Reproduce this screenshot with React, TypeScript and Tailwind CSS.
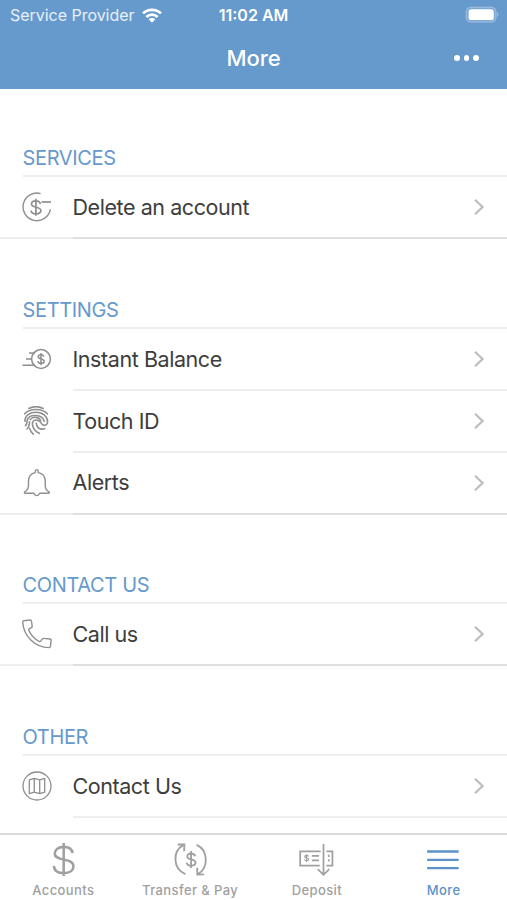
import React from 'react';

type IconProps = { className?: string };

const DeleteAccountIcon: React.FC<IconProps> = ({ className }) => (
  <svg viewBox="0 0 30 30" fill="none" stroke="currentColor" strokeWidth="1.4" className={className}>
    <path d="M18.6 1.6A13.8 13.8 0 1 0 28.4 17.4" />
    <path d="M19.5 10h9.5" strokeWidth="1.7" />
    <path d="M18.4 12c-.4-2-2-3.1-4.5-3.1-2.6 0-4.4 1.2-4.4 3.1 0 4.4 9.4 2.1 9.4 6.6 0 2.1-2 3.3-4.9 3.3-2.8 0-4.7-1.2-5-3.3M13.9 6.8v17" strokeWidth="1.7" />
  </svg>
);

const InstantBalanceIcon: React.FC<IconProps> = ({ className }) => (
  <svg viewBox="0 0 30 30" fill="none" stroke="currentColor" strokeWidth="1.5" className={className}>
    <circle cx="19" cy="15" r="9.4" />
    <path d="M7 9h6M4 15h5.8M0.5 21.2h12.5" />
    <path d="M21.9 12.6c-.3-1.3-1.2-1.9-2.9-1.9-1.6 0-2.8.7-2.8 2.1 0 2.9 6 1.4 6 4.4 0 1.4-1.3 2.2-3.1 2.2-1.9 0-3-.8-3.2-2.2M19 9v12.2" />
  </svg>
);

const AlertsIcon: React.FC<IconProps> = ({ className }) => (
  <svg viewBox="0 0 30 30" fill="none" stroke="currentColor" strokeWidth="1.4" strokeLinejoin="round" className={className}>
    <path d="M13.4 4.6V3c0-1.8 2.8-1.8 2.8 0v1.6c4.6.8 7 3.9 7 8.5v4.3c0 2.9 1.2 4.8 3.7 6.5.8.6.5 1.4-.4 1.4h-8c-.9 0-1.2.4-1.5 1-.8 1.7-3.6 1.7-4.4 0-.3-.6-.7-1-1.6-1H3.2c-.9 0-1.2-.8-.4-1.4 2.5-1.7 3.7-3.6 3.7-6.5v-4.3c0-4.6 2.4-7.7 6.9-8.5z" />
  </svg>
);

const PhoneIcon: React.FC<IconProps> = ({ className }) => (
  <svg viewBox="0 0 30 30" fill="none" stroke="currentColor" strokeWidth="1.4" strokeLinejoin="round" className={className}>
    <path d="M1.6 1.7 8 1c.8-.1 1.3.3 1.4 1l.8 5c.1.8-.1 1.3-.8 1.7L7.2 9.9c-.5.4-.6.8-.4 1.4 2.2 5.2 5.5 8.6 10.3 11.1.7.4 1.1.3 1.6-.3l1.6-2c.5-.7 1-.8 1.8-.7l5.9.6c.8.1 1.2.6 1.1 1.4l-.6 5.9c-.1.9-.6 1.3-1.5 1.3C12.7 28.2 1.6 17 .7 3.2c0-.8.2-1.4.9-1.5z" />
  </svg>
);

const MapIcon: React.FC<IconProps> = ({ className }) => (
  <svg viewBox="0 0 30 30" fill="none" stroke="currentColor" strokeWidth="1.3" strokeLinejoin="round" className={className}>
    <circle cx="15" cy="15" r="14" />
    <path d="M7.3 8.9 12.3 7.4l5.4 1.5 5-1.5v13.7l-5 1.5-5.4-1.5-5 1.5zM12.3 7.4v13.7M17.7 8.9v13.7" />
  </svg>
);

const TouchIcon: React.FC<IconProps> = ({ className }) => (
  <svg viewBox="1 0 30 30" fill="none" stroke="currentColor" strokeWidth="1.6" strokeLinecap="round" className={className}>
    <path d="M7.8 2.5C12 .4 18 .4 22.2 2.5" />
    <path d="M3.6 7.8C9 2.1 21 2.1 26.4 7.8" />
    <path d="M3.9 15.2C3.8 9.3 8.6 6.3 15 6.3c6.7 0 11.6 4 11.6 9.6 0 3.2-3.2 4.4-5.4 2.5-1.9-1.7-1.6-4.2-5.9-4.4-3.6-.1-4.6 3-3.5 6.2 1.1 3.4 3.3 5.6 6.6 7.1" />
    <path d="M4.4 19.6c2.2-1.8 1.1-3.9 2-6.2C9 7.8 21.3 8 23.2 15.2" />
    <path d="M6 23c3-2.4 1.9-5 2.6-7.3" />
    <path d="M9.2 13.6c3.1-3.8 9.2-2.5 10.5 1.1" />
    <path d="M15.2 17.2c.5 4.6 3.8 6.9 8.6 5.6M8.6 22.2c.4 2.2 1.7 4.2 3.7 5.9" />
  </svg>
);

const DollarIcon: React.FC<IconProps> = ({ className }) => (
  <svg viewBox="0 0 36 36" fill="none" stroke="currentColor" strokeWidth="2.6" className={className}>
    <path d="M27.4 11.4C26.7 7.4 23.3 5 18.2 5c-5.3 0-9.2 2.8-9.2 6.7 0 8.8 19.2 4 19.2 13.3 0 4.3-4 7.1-9.8 7.1-6.1 0-10-2.8-10.3-7.6M18.2 1v34" />
  </svg>
);

const TransferIcon: React.FC<IconProps> = ({ className }) => (
  <svg viewBox="0 0 36 36" fill="none" stroke="currentColor" strokeWidth="1.9" className={className}>
    <path d="M12.7 33C-.6 27.3-.5 9.5 10.5 3.2M4.8 2.6l6.9-.1-.2 7.1" />
    <path d="M24.3 3C36.5 8.6 36.6 26.5 26 32.8M24.9 26.4l.1 7.1 7-.2" />
    <path d="M22.9 14.7c-.5-1.9-1.9-2.9-4.2-2.9s-4 1.2-4 3c0 4.2 8.5 2.1 8.5 6.4 0 2-1.8 3.2-4.4 3.2-2.6 0-4.4-1.2-4.7-3.2M18.6 9.3v17.5" />
  </svg>
);

const DepositIcon: React.FC<IconProps> = ({ className }) => (
  <svg viewBox="0 0 36 36" fill="none" stroke="currentColor" strokeWidth="1.8" className={className}>
    <path d="M22.3 9.6H1.2v14.8h20.2M28.2 9.6h6.2v14.8h-6.2M25.2 2v31M19.3 28l5.9 5.7 5.9-5.7" />
    <path d="M13.2 14.2h7.4M13.2 19h7.4M30.6 13.2v2.2M30.6 17.8V20" />
    <path d="M9.8 14.9c-.3-.8-1-1.1-2-1.1-1.1 0-1.9.4-1.9 1.3 0 1.8 4.1.8 4.1 2.7 0 1-.9 1.5-2.1 1.5s-2-.5-2.2-1.4M7.8 12.5v8.3" strokeWidth="1.2" />
  </svg>
);

const MenuIcon: React.FC<IconProps> = ({ className }) => (
  <svg viewBox="0 0 36 36" fill="none" stroke="currentColor" strokeWidth="2.5" className={className}>
    <path d="M1.2 9.8h32.4M1.2 18.4h32.4M1.2 26.9h32.4" />
  </svg>
);

const Chevron: React.FC<IconProps> = ({ className }) => (
  <svg viewBox="0 0 12 18" fill="none" stroke="currentColor" strokeWidth="2.2" className={className}>
    <path d="m2 1.8 7.6 7.2L2 16.2" />
  </svg>
);

const SECTIONS = [
  {
    title: 'SERVICES',
    items: [{ label: 'Delete an account', icon: DeleteAccountIcon }],
  },
  {
    title: 'SETTINGS',
    items: [
      { label: 'Instant Balance', icon: InstantBalanceIcon },
      { label: 'Touch ID', icon: TouchIcon },
      { label: 'Alerts', icon: AlertsIcon },
    ],
  },
  {
    title: 'CONTACT US',
    items: [{ label: 'Call us', icon: PhoneIcon }],
  },
  {
    title: 'OTHER',
    items: [{ label: 'Contact Us', icon: MapIcon }],
    open: true, // list continues below the tab bar
  },
];

const TABS = [
  { label: 'Accounts', icon: DollarIcon },
  { label: 'Transfer & Pay', icon: TransferIcon },
  { label: 'Deposit', icon: DepositIcon },
  { label: 'More', icon: MenuIcon, active: true },
];

const Header = () => (
  <header className="h-[88.5px] shrink-0 bg-[#6699cc] text-white">
    <div className="grid h-[30px] grid-cols-[1fr_auto_1fr] items-center pl-[10px] pr-[8px]">
      <div className="flex items-center gap-[7px] text-[16px] tracking-[-0.03px] text-white/85">
        <span className="whitespace-nowrap">Service Provider</span>
        <svg viewBox="0 0 20 15" className="h-[15px] w-[20px] text-white" fill="none" stroke="currentColor" strokeWidth="2.7">
          <path d="M1 5.4a13 13 0 0 1 18 0M4.3 8.9a8.3 8.3 0 0 1 11.4 0" />
          <path d="m10 14.8-3.4-3.5a4.8 4.8 0 0 1 6.8 0z" fill="currentColor" stroke="none" />
        </svg>
      </div>
      <span className="-translate-x-px text-[16px] font-semibold">11:02 AM</span>
      <svg viewBox="0 0 34 18" className="h-[18px] w-[34px] justify-self-end">
        <rect x="1.2" y="1.2" width="29.8" height="14.8" rx="4.5" fill="white" fillOpacity=".15" stroke="white" strokeOpacity=".25" strokeWidth="1.4" />
        <rect x="3.6" y="3.3" width="25.2" height="10.8" rx="2.7" fill="white" />
        <path d="M32.1 6.1c1.7.8 1.7 4.1 0 4.9z" fill="white" fillOpacity=".4" />
      </svg>
    </div>
    <div className="grid h-[56px] grid-cols-[1fr_auto_1fr] items-center pr-[28px]">
      <h1 className="col-start-2 translate-x-[14px] text-[22px] font-medium tracking-[-0.1px]">More</h1>
      <button className="flex gap-[4px] justify-self-end">
        {[0, 1, 2].map((i) => (
          <span key={i} className="size-[5.6px] rounded-full bg-white" />
        ))}
      </button>
    </div>
  </header>
);

export default function App() {
  return (
    <div className="flex h-[900px] w-[507px] flex-col overflow-hidden bg-white font-['Inter',sans-serif] text-[#3d3d3d]">
      <Header />
      <main className="min-h-0 flex-1 overflow-hidden">
        {SECTIONS.map((section, i) => (
          <section key={section.title} className={i === 0 ? '-mt-[1.1px]' : ''}>
            <div className="ml-[22.5px] flex h-[89.8px] items-end border-b-2 border-[#eeeeee]">
              <h2 className="pb-[6px] text-[20px] leading-[22px] tracking-[-0.35px] text-[#6699cc]">{section.title}</h2>
            </div>
            {section.items.map(({ label, icon: Icon }, j) => {
              const last = j === section.items.length - 1 && !section.open;
              return (
                <div key={label} className="flex h-[61.9px]">
                  <div className={`flex w-[72.5px] shrink-0 items-center border-b-2 pl-[21.5px] ${last ? 'border-[#eeeeee]' : 'border-transparent'}`}>
                    <Icon className="size-[30px] text-[#8f8f8f]" />
                  </div>
                  <div className={`flex flex-1 items-center justify-between border-b-2 pr-[22px] ${last ? 'border-[#e0e0e0]' : 'border-[#eeeeee]'}`}>
                    <span className="text-[21.5px] tracking-[-0.43px]">{label}</span>
                    <Chevron className="h-[18px] w-[12px] text-[#bdbdbd]" />
                  </div>
                </div>
              );
            })}
          </section>
        ))}
      </main>
      <nav className="grid h-[67px] shrink-0 grid-cols-4 border-t-2 border-[#d9d9d9]">
        {TABS.map(({ label, icon: Icon, active }) => (
          <button key={label} className={`flex flex-col items-center pt-[7px] ${active ? 'text-[#5c92c9]' : 'text-[#a0a0a0]'}`}>
            <Icon className="size-[35px]" />
            <span className="mt-[5px] whitespace-nowrap text-[13px] font-medium leading-[16px] tracking-[0.4px]">{label}</span>
          </button>
        ))}
      </nav>
    </div>
  );
}
